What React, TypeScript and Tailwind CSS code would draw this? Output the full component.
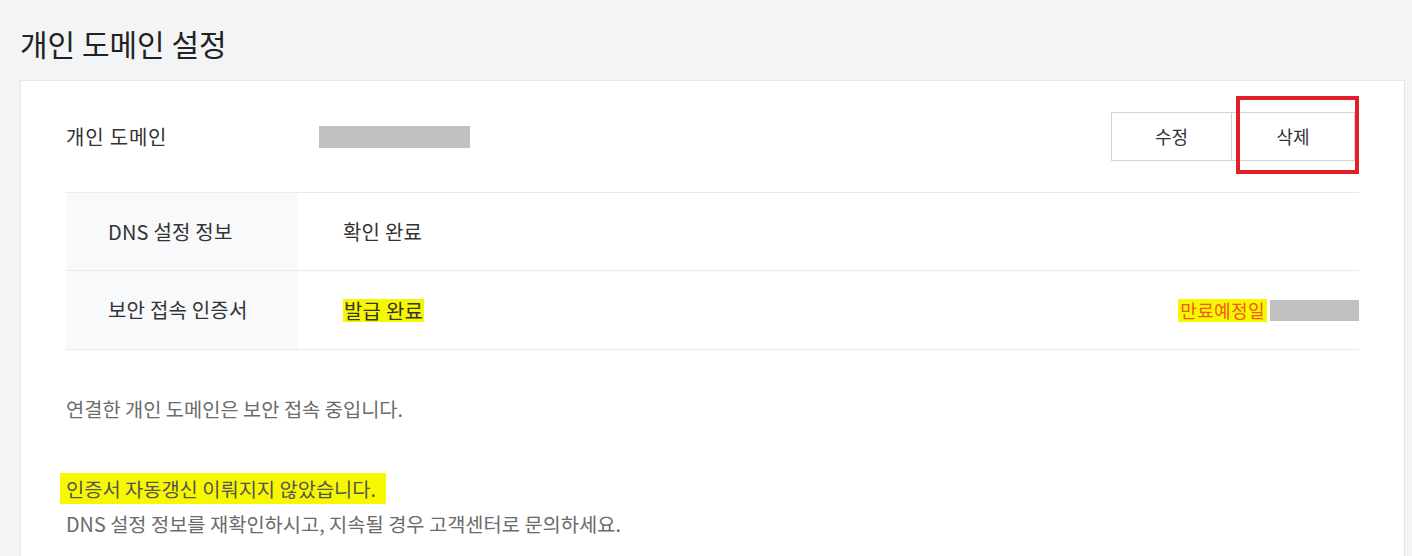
export default function App() {
  return (
    <div
      className="min-h-screen bg-[#f3f4f6] pl-5 pt-[21px] text-[#333]"
      style={{ fontFamily: '"Noto Sans CJK KR", "Noto Sans", sans-serif' }}
    >
      {/* Page title */}
      <h1 className="text-[30px] leading-[44px] text-[#222]">개인 도메인 설정</h1>

      {/* Card */}
      <div className="mt-[15px] mr-[7px] bg-white border border-[#e4e6ea] px-[45px] pb-10">
        {/* Domain row */}
        <div className="relative flex items-center h-[111px]">
          <span className="w-[253px] text-[20px] tracking-[0.8px] text-[#333]">개인 도메인</span>
          <div className="w-[151px] h-[22px] bg-[#c0c0c0]" />
          <div className="ml-auto mr-[4px] flex">
            <button className="w-[121px] h-[49px] border border-[#cfd3d8] bg-white text-[18px] text-[#333]">
              수정
            </button>
            <button className="w-[123px] h-[49px] border border-l-0 border-[#cfd3d8] bg-white text-[18px] text-[#333]">
              삭제
            </button>
          </div>
          {/* Red annotation box */}
          <div className="absolute right-0 top-[15px] w-[123px] h-[78px] border-4 border-[#e3202a]" />
        </div>

        {/* Status table */}
        <div className="border-t border-[#e8eaee]">
          <div className="flex h-[78px] border-b border-[#e8eaee] text-[20px] tracking-[0.2px]">
            <div className="w-[232px] bg-[#f8f9fb] pl-[42px] flex items-center text-[#333]">
              DNS 설정 정보
            </div>
            <div className="flex-1 pl-[45px] flex items-center text-[#333]">확인 완료</div>
          </div>
          <div className="flex h-[79px] border-b border-[#e8eaee] text-[20px] tracking-[0.2px]">
            <div className="w-[232px] bg-[#f8f9fb] pl-[42px] flex items-center text-[#333]">
              보안 접속 인증서
            </div>
            <div className="flex-1 pl-[45px] flex items-center">
              <span className="bg-[#f7f700] text-[#333] px-[1px] leading-[23px]">발급 완료</span>
              <div className="ml-auto flex items-center gap-[3px]">
                <span className="bg-[#f7f700] text-[#f05a22] text-[18px] tracking-[0.4px] px-[2px] leading-[23px]">
                  만료예정일
                </span>
                <div className="w-[89px] h-[21px] bg-[#c0c0c0]" />
              </div>
            </div>
          </div>
        </div>

        {/* Notes */}
        <p className="mt-[46px] text-[19.8px] leading-[26px] text-[#6b6b6b]">
          연결한 개인 도메인은 보안 접속 중입니다.
        </p>
        <p className="mt-[54px] text-[19.8px] leading-[26px] -ml-[6px]">
          <span className="bg-[#f7f700] text-[#555] pl-[6px] pr-[10px] py-[1px]">
            인증서 자동갱신 이뤄지지 않았습니다.
          </span>
        </p>
        <p className="mt-[9px] text-[19.8px] leading-[26px] text-[#6b6b6b]">
          DNS 설정 정보를 재확인하시고, 지속될 경우 고객센터로 문의하세요.
        </p>
      </div>
    </div>
  );
}
